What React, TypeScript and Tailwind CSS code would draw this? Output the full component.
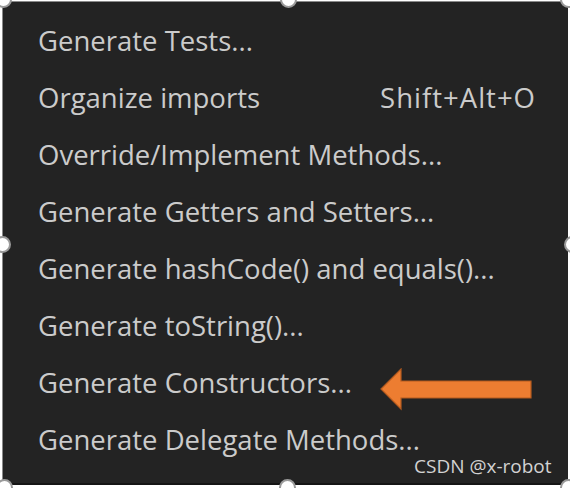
import React from "react";

const items = [
  "Generate Tests...",
  "Organize imports",
  "Override/Implement Methods...",
  "Generate Getters and Setters...",
  "Generate hashCode() and equals()...",
  "Generate toString()...",
  "Generate Constructors...",
  "Generate Delegate Methods...",
];

const handles = [
  "left-[-5px] top-[-9px]",
  "left-[280px] top-[-9px]",
  "left-[560px] top-[-9px]",
  "left-[-6px] top-[236px]",
  "left-[564px] top-[236px]",
  "left-[-4px] top-[479px]",
  "left-[279px] top-[479px]",
  "left-[560px] top-[479px]",
];

export default function App() {
  return (
    <div
      className="relative w-[570px] h-[488px] overflow-hidden bg-white"
      style={{ fontFamily: '"Open Sans", "Noto Sans", sans-serif' }}
    >
      <div className="ml-[2px] mt-[1px] w-[566px] h-[484px] bg-[#232323] border-l border-t border-[#8a8a8a] border-b-2 border-b-[#151515]">
        <div className="flex flex-col pt-[10px] pl-[35px] pr-[32px] text-[27.5px] text-[#cbcbcb]">
          {items.map((t, i) => (
            <div key={i} className="h-[57px] flex items-center justify-between">
              <span>{t}</span>
              {i === 1 && <span className="tracking-[1px]">Shift+Alt+O</span>}
            </div>
          ))}
        </div>
      </div>

      {/* Arrow */}
      <svg className="absolute left-[380px] top-[368px]" width="154" height="44" viewBox="0 0 154 44">
        <polygon
          points="1,21 21,1 21,13 151,13 151,30 21,30 21,41"
          fill="#ed7d31"
          stroke="#b35a1f"
          strokeWidth="1.2"
        />
      </svg>

      <div className="absolute left-[414px] top-[452px] text-[19px] text-[#d2d2d2]">CSDN @x-robot</div>

      {handles.map((h, i) => (
        <div
          key={i}
          className={`absolute w-[17px] h-[17px] rounded-full bg-white border-2 border-[#9a9a9a] ${h}`}
        />
      ))}
    </div>
  );
}
